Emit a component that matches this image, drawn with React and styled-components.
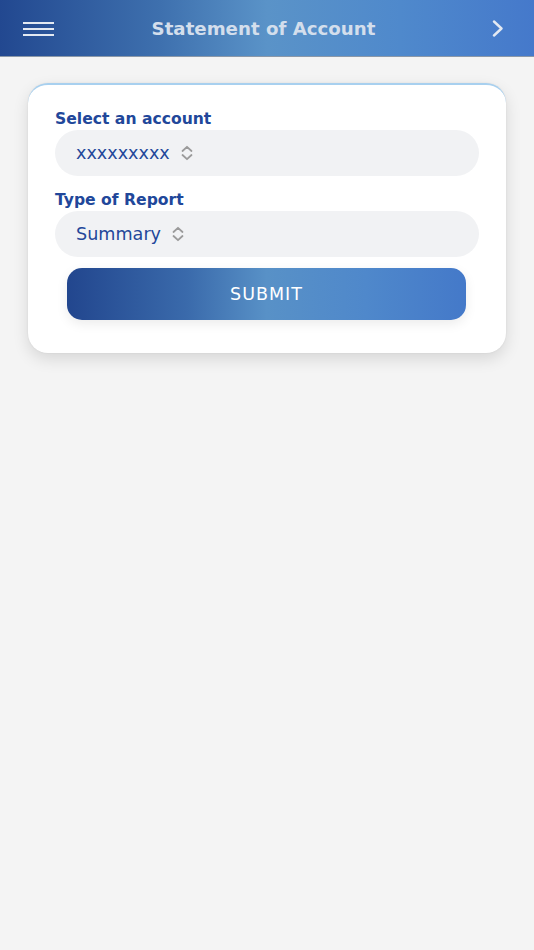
import React from "react";
import styled, { createGlobalStyle } from "styled-components";

const GlobalStyle = createGlobalStyle`
  html, body {
    margin: 0;
    padding: 0;
    background: #f4f4f4;
    font-family: "DejaVu Sans", "Liberation Sans", sans-serif;
  }
`;

const Page = styled.div`
  min-height: 950px;
  background: #f4f4f4;
`;

const Header = styled.header`
  height: 57px;
  box-sizing: border-box;
  display: grid;
  grid-template-columns: 1fr auto 1fr;
  align-items: center;
  padding: 1px 30px 0 23px;
  background: linear-gradient(90deg, #224890 0%, #3e70ae 30%, #5a93c8 50%, #4f89cc 75%, #4579cb 100%);
  border-bottom: 1px solid #8b98a8;
`;

const IconButton = styled.button`
  border: 0;
  background: none;
  padding: 0;
  display: flex;
  align-items: center;
  justify-self: ${(p) => (p.$end ? "end" : "start")};
  cursor: pointer;
`;

const Title = styled.h1`
  margin: 0;
  font-size: 18.2px;
  font-weight: 700;
  color: #d3deec;
`;

const Card = styled.div`
  margin: 26px 28px 0;
  padding: 24px 27px 33px;
  background: #fff;
  border-radius: 20px;
  border-top: 2px solid #a8d0ef;
  box-shadow: 0 6px 16px rgba(0, 0, 0, 0.12), 0 0 2px rgba(0, 0, 0, 0.08);
  display: flex;
  flex-direction: column;
`;

const Label = styled.label`
  display: block;
  font-size: 15.6px;
  font-weight: 700;
  color: #21479a;
  line-height: 20px;
  margin-top: ${(p) => (p.$first ? "0" : "14px")};
  margin-bottom: 1px;
`;

const Select = styled.div`
  height: 46px;
  border-radius: 23px;
  background: #f1f2f4;
  display: flex;
  align-items: center;
  gap: 10px;
  padding-left: 21px;
  font-size: 17.6px;
  color: #23479a;
`;

const Submit = styled.button`
  margin: 11px 13px 0 12px;
  height: 52px;
  border: 0;
  border-radius: 15px;
  background: linear-gradient(90deg, #22468e 0%, #3a6aab 30%, #5891c7 50%, #4f88cb 75%, #4479c9 100%);
  color: #fff;
  font-family: "DejaVu Sans", "Liberation Sans", sans-serif;
  font-size: 17.5px;
  letter-spacing: 1px;
  box-shadow: 0 4px 12px rgba(0, 0, 0, 0.08);
  cursor: pointer;
`;

const Updown = () => (
  <svg width="14" height="16" viewBox="0 0 14 16" fill="none" stroke="#9b9b9b" strokeWidth="1.8" strokeLinecap="round" strokeLinejoin="round">
    <path d="M2.5 6 L7 1.8 L11.5 6" />
    <path d="M2.5 10 L7 14.2 L11.5 10" />
  </svg>
);

const App = () => (
  <Page>
    <GlobalStyle />
    <Header>
      <IconButton aria-label="menu">
        <svg width="31" height="16" viewBox="0 0 31 16" stroke="#e3e9f2" strokeWidth="2">
          <path d="M0 2 H31 M0 8 H31 M0 14 H31" />
        </svg>
      </IconButton>
      <Title>Statement of Account</Title>
      <IconButton $end aria-label="next">
        <svg width="13" height="17" viewBox="0 0 13 17" fill="none" stroke="#e3e9f2" strokeWidth="2.4" strokeLinecap="round" strokeLinejoin="round">
          <path d="M3 1.5 L10.5 8.5 L3 15.5" />
        </svg>
      </IconButton>
    </Header>
    <Card>
      <Label $first>Select an account</Label>
      <Select>
        xxxxxxxxx
        <Updown />
      </Select>
      <Label>Type of Report</Label>
      <Select>
        Summary
        <Updown />
      </Select>
      <Submit>SUBMIT</Submit>
    </Card>
  </Page>
);

export default App;
